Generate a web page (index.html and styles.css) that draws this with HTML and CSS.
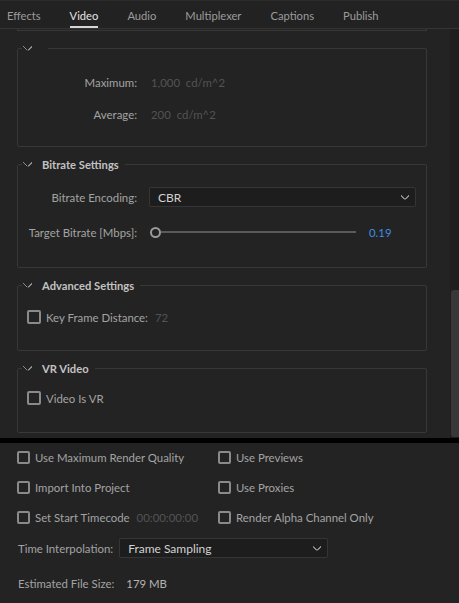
FILE: index.html
```html
<!DOCTYPE html>
<html lang="en">
  <head>
    <meta charset="UTF-8" />
    <title>Export Settings</title>
    <link rel="stylesheet" href="styles.css">
  </head>
  <body>
    <nav class="tabs">
      <span class="tab">Effects</span>
      <span class="tab active">Video</span>
      <span class="tab">Audio</span>
      <span class="tab">Multiplexer</span>
      <span class="tab">Captions</span>
      <span class="tab">Publish</span>
    </nav>

    <div class="scroll-area">
      <div class="scroll-content">
        <div class="group-cut"></div>

        <fieldset class="group g-luma">
          <legend><span class="chev"></span><span class="legend-text"></span></legend>
          <div class="row">
            <label>Maximum:</label>
            <span class="dim value">1,000&nbsp; cd/m^2</span>
          </div>
          <div class="row">
            <label>Average:</label>
            <span class="dim value">200&nbsp; cd/m^2</span>
          </div>
        </fieldset>

        <fieldset class="group g-bitrate">
          <legend><span class="chev"></span><span class="legend-text">Bitrate Settings</span></legend>
          <div class="row">
            <label>Bitrate Encoding:</label>
            <div class="select">CBR<span class="chev"></span></div>
          </div>
          <div class="row">
            <label>Target Bitrate [Mbps]:</label>
            <div class="slider">
              <span class="knob"></span>
              <span class="track"></span>
              <span class="slider-value">0.19</span>
            </div>
          </div>
        </fieldset>

        <fieldset class="group g-adv">
          <legend><span class="chev"></span><span class="legend-text">Advanced Settings</span></legend>
          <div class="check-row">
            <span class="box"></span>
            <span>Key Frame Distance:</span>
            <span class="dim">72</span>
          </div>
        </fieldset>

        <fieldset class="group g-vr">
          <legend><span class="chev"></span><span class="legend-text">VR Video</span></legend>
          <div class="check-row">
            <span class="box"></span>
            <span>Video Is VR</span>
          </div>
        </fieldset>
      </div>
      <div class="scrollbar"><div class="thumb"></div></div>
    </div>

    <div class="divider"></div>

    <div class="bottom">
      <div class="options">
        <div class="check-row"><span class="box"></span><span>Use Maximum Render Quality</span></div>
        <div class="check-row"><span class="box"></span><span>Use Previews</span></div>
        <div class="check-row"><span class="box"></span><span>Import Into Project</span></div>
        <div class="check-row"><span class="box"></span><span>Use Proxies</span></div>
        <div class="check-row"><span class="box"></span><span>Set Start Timecode</span><span class="dim timecode">00:00:00:00</span></div>
        <div class="check-row"><span class="box"></span><span>Render Alpha Channel Only</span></div>
      </div>
      <div class="interp">
        <label>Time Interpolation:</label>
        <div class="select">Frame Sampling<span class="chev"></span></div>
      </div>
      <div class="filesize">
        <span>Estimated File Size:</span>
        <span class="size">179 MB</span>
      </div>
    </div>
  </body>
</html>
```

FILE: styles.css
```css
:root {
  --bg: #232323;
  --line: #383838;
  --label: #a3a3a3;
  --dim: #535353;
  --accent: #3f8de0;
}
* {
  box-sizing: border-box;
  margin: 0;
  padding: 0;
}
body {
  width: 459px;
  height: 603px;
  overflow: hidden;
  background: var(--bg);
  color: var(--label);
  font-family: "Lato", "Liberation Sans", sans-serif;
  font-size: 11.4px;
}

/* tabs */
.tabs {
  display: flex;
  gap: 29px;
  height: 29px;
  padding-left: 7px;
  border-top: 1px solid #2c2c2c;
  border-bottom: 1px solid #343434;
  background: #222;
}
.tab {
  color: #9c9c9c;
  font-size: 11.2px;
  line-height: 29px;
  height: 27px;
}
.tab.active {
  color: #e4e4e4;
  border-bottom: 2px solid #d4d4d4;
}

/* scrolling panel */
.scroll-area {
  display: flex;
  height: 409px;
  overflow: hidden;
}
.scroll-content {
  flex: 1;
  display: flex;
  flex-direction: column;
  gap: 10px;
  padding: 0 23px 0 17px;
}
.group-cut {
  height: 2px;
  border: 1px solid var(--line);
  border-top: none;
}
.scrollbar {
  width: 9px;
  background: #1e1e1e;
  padding-top: 261px;
  padding-left: 1px;
}
.thumb {
  height: 147px;
  background: #383838;
  border-radius: 3px 0 0 3px;
}

.group {
  border: 1px solid var(--line);
  border-radius: 2px;
  padding: 0 10px;
  min-width: 0;
}
.group legend {
  display: flex;
  align-items: center;
  height: 14px;
  margin-left: -6px;
  padding: 0 6px 0 1px;
}
.legend-text {
  margin-left: 10px;
  color: #c2c2c2;
  font-weight: bold;
  font-size: 11.2px;
}
.chev {
  width: 9px;
  height: 9px;
  display: inline-block;
  background:
    linear-gradient(45deg, transparent 46%, #8c8c8c 46%, #8c8c8c 58%, transparent 58%) left / 50% 100% no-repeat,
    linear-gradient(-45deg, transparent 46%, #8c8c8c 46%, #8c8c8c 58%, transparent 58%) right / 50% 100% no-repeat;
  clip-path: inset(2px 0 2px 0);
}
.legend-text:empty {
  margin-left: 0;
  width: 10px;
}

.g-luma { padding-top: 17px; padding-bottom: 22px; }
.g-bitrate { padding-top: 16px; padding-bottom: 25px; }
.g-adv { padding-top: 15px; padding-bottom: 23px; }
.g-vr { padding-top: 13px; padding-bottom: 24px; }

.g-luma .row + .row { margin-top: 12px; }
.g-bitrate .row + .row { margin-top: 15px; }

.row {
  display: grid;
  grid-template-columns: 109px 1fr;
  column-gap: 12px;
  align-items: center;
  height: 20px;
}
.row label {
  text-align: right;
  white-space: nowrap;
}
.value {
  padding-left: 2px;
}
.dim {
  color: var(--dim);
}

.select {
  display: flex;
  align-items: center;
  justify-content: space-between;
  height: 20px;
  padding: 0 6px 0 8px;
  background: #1d1d1d;
  border: 1px solid #353535;
  border-radius: 2px;
  color: #d2d2d2;
  font-size: 12px;
}
.select .chev {
  width: 8px;
}

.slider {
  display: flex;
  align-items: center;
  padding-left: 1px;
}
.knob {
  width: 11px;
  height: 11px;
  border: 2px solid #9a9a9a;
  border-radius: 50%;
  flex: none;
}
.track {
  flex: 1;
  height: 2px;
  background: #5a5a5a;
}
.slider-value {
  width: 60px;
  padding-left: 13px;
  color: var(--accent);
}

.check-row {
  display: flex;
  align-items: center;
  gap: 5px;
  height: 20px;
  white-space: nowrap;
}
.box {
  width: 14px;
  height: 14px;
  border: 2px solid #8a8a8a;
  border-radius: 2px;
  flex: none;
  margin-left: -1px;
}
.check-row .dim {
  margin-left: 2px;
}

.divider {
  height: 5px;
  background: #000;
}

/* bottom options */
.bottom {
  padding: 4px 17px 0;
}
.options {
  display: grid;
  grid-template-columns: 201px 1fr;
  row-gap: 10px;
}
.options .box {
  width: 13px;
  height: 13px;
  margin-left: 0;
}
.timecode {
  margin-left: 0;
}
.interp {
  display: flex;
  align-items: center;
  gap: 6px;
  margin-top: 11px;
  padding-left: 1px;
}
.interp .select {
  width: 209px;
}
.filesize {
  display: flex;
  gap: 12px;
  height: 20px;
  align-items: center;
  margin-top: 15px;
  padding-left: 1px;
}
.size {
  color: #b4b4b4;
}
```
